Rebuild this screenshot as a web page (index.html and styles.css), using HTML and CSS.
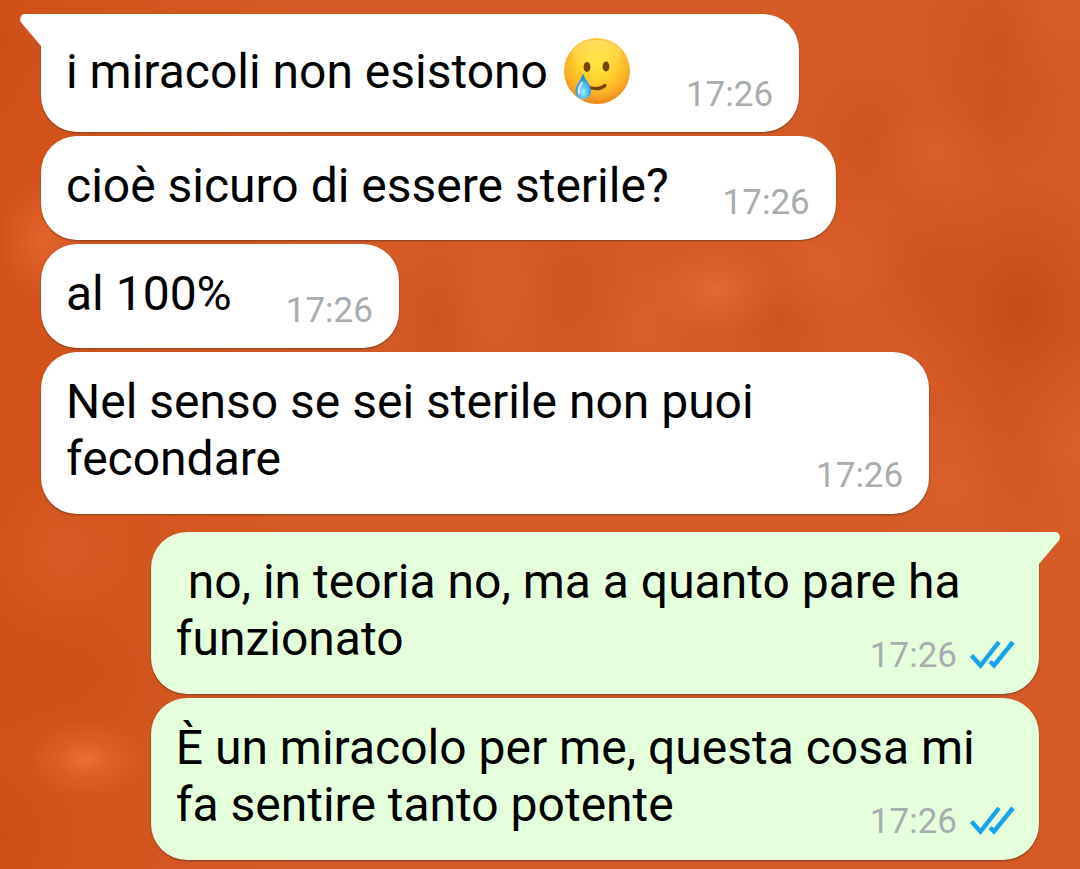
FILE: index.html
```html
<!DOCTYPE html>
<html lang="it">
<head>
    <meta charset="UTF-8">
    <meta name="viewport" content="width=device-width, initial-scale=1.0">
    <title>Chat</title>
    <link rel="stylesheet" href="styles.css">
</head>
<body>

    <svg width="0" height="0" class="defs" aria-hidden="true">
        <symbol id="ticks" viewBox="0 0 46 32">
            <path d="M2.5 15.5 L11.5 25.500 L30 2 M21 21.5 L25 25.500 L44 2" fill="none" stroke="#14a5ec" stroke-width="4.400"/>
        </symbol>
    </svg>

    <main class="chat">
        <div class="group">
            <div class="bubble has-tail">
                <svg class="tail" viewBox="0 0 22 34" aria-hidden="true"><path d="M22 0 H5 C0 0 -1 6 1.5 9 L21 32 H22 Z" fill="#fff"/></svg>
                <p class="text">i miracoli non esistono <svg class="emoji" viewBox="0 0 68 68" role="img" aria-label="faccina sorridente con lacrima">
                    <defs>
                        <radialGradient id="face" cx="50%" cy="36%" r="66%">
                            <stop offset="0" stop-color="#ffe840"/>
                            <stop offset="0.45" stop-color="#ffd02e"/>
                            <stop offset="0.75" stop-color="#fbae24"/>
                            <stop offset="1" stop-color="#e8821c"/>
                        </radialGradient>
                        <linearGradient id="shine" x1="0" y1="0" x2="0" y2="1">
                            <stop offset="0" stop-color="#fff09a" stop-opacity="0.5"/>
                            <stop offset="1" stop-color="#ffe35a" stop-opacity="0"/>
                        </linearGradient>
                        <radialGradient id="tear" cx="50%" cy="72%" r="60%">
                            <stop offset="0" stop-color="#a5e9fc"/>
                            <stop offset="0.5" stop-color="#55bdf0"/>
                            <stop offset="1" stop-color="#1c83d0"/>
                        </radialGradient>
                    </defs>
                    <circle cx="34" cy="34" r="33" fill="url(#face)"/>
                    <ellipse cx="34" cy="17" rx="25" ry="14" fill="url(#shine)"/>
                    <ellipse cx="24" cy="30" rx="3.4" ry="5" fill="#75400c"/>
                    <ellipse cx="43" cy="29.500" rx="3.4" ry="5" fill="#75400c"/>
                    <path d="M25 50 Q36 54 42 48.500" fill="none" stroke="#75400c" stroke-width="3.200" stroke-linecap="round"/>
                    <path d="M20 36.500 C22 43 28 47 28 54 C28 59 24.500 62 20 62 C15.500 62 12.500 59 12.500 54 C12.500 48 18 43 20 36.500 Z" fill="url(#tear)"/>
                    <path d="M19 46 Q15 51 16 56" fill="none" stroke="#d4f5fe" stroke-width="2" stroke-linecap="round"/>
                </svg></p>
                <div class="meta"><time>17:26</time></div>
            </div>
            <div class="bubble">
                <p class="text">cioè sicuro di essere sterile?</p>
                <div class="meta"><time>17:26</time></div>
            </div>
            <div class="bubble">
                <p class="text">al 100%</p>
                <div class="meta"><time>17:26</time></div>
            </div>
            <div class="bubble long">
                <p class="text">Nel senso se sei sterile non puoi fecondare</p>
                <div class="meta"><time>17:26</time></div>
            </div>
        </div>

        <div class="group mine">
            <div class="bubble long has-tail">
                <svg class="tail" viewBox="0 0 22 34" aria-hidden="true"><path d="M0 0 H17 C22 0 23 6 20.500 9 L1 32 H0 Z" fill="#e5ffdc"/></svg>
                <p class="text"> no, in teoria no, ma a quanto pare ha funzionato</p>
                <div class="meta"><time>17:26</time><svg class="ticks" role="img" aria-label="letto"><use href="#ticks"/></svg></div>
            </div>
            <div class="bubble long">
                <p class="text">È un miracolo per me, questa cosa mi fa sentire tanto potente</p>
                <div class="meta"><time>17:26</time><svg class="ticks" role="img" aria-label="letto"><use href="#ticks"/></svg></div>
            </div>
        </div>
    </main>

</body>
</html>
```
FILE: styles.css
```css
:root {
    --in: #ffffff;
    --out: #e5ffdc;
    --wall: #d65a25;
    --wall-light: #e268345c 0, #e268342e 45%;
    --wall-dark: #c64a1470 0, #c64a1438 45%;
    --time: #a7adae;
}

* {
    box-sizing: border-box;
}

/* Blurry wallpaper */
body {
    margin: 0;
    min-height: 100vh;
    font-family: Roboto, "Noto Sans", sans-serif;
    color: #000;
    background-color: var(--wall);
    background-image:
        radial-gradient(60px 40px at 85px 759px, #fa7a42b0, #fa7a4240 45%, transparent),
        radial-gradient(70px 46px at 716px 290px, #ee753d90, #ee753d38 45%, transparent),
        radial-gradient(60px 90px at 510px 285px, var(--wall-light), transparent),
        radial-gradient(70px 50px at 932px 148px, var(--wall-light), transparent),
        radial-gradient(60px 80px at 1055px 15px, var(--wall-light), transparent),
        radial-gradient(80px 60px at 820px 265px, var(--wall-light), transparent),
        radial-gradient(80px 110px at 1070px 450px, var(--wall-light), transparent),
        radial-gradient(80px 80px at 955px 485px, var(--wall-light), transparent),
        radial-gradient(50px 80px at 645px 330px, var(--wall-light), transparent),
        radial-gradient(80px 80px at 60px 550px, var(--wall-light), transparent),
        radial-gradient(50px 60px at 45px 240px, #ee703a90, transparent),
        radial-gradient(110px 140px at 1020px 310px, #bf420da0, #bf420d50 45%, transparent),
        radial-gradient(100px 80px at 1005px 35px, var(--wall-dark), transparent),
        radial-gradient(70px 80px at 870px 140px, var(--wall-dark), transparent),
        radial-gradient(80px 80px at 995px 110px, var(--wall-dark), transparent),
        radial-gradient(60px 90px at 925px 270px, var(--wall-dark), transparent),
        radial-gradient(70px 90px at 1020px 460px, var(--wall-dark), transparent),
        radial-gradient(80px 90px at 560px 290px, var(--wall-dark), transparent),
        radial-gradient(50px 80px at 435px 320px, var(--wall-dark), transparent),
        radial-gradient(60px 80px at 780px 320px, var(--wall-dark), transparent),
        radial-gradient(130px 80px at 60px 675px, var(--wall-dark), transparent),
        radial-gradient(70px 70px at 5px 835px, var(--wall-dark), transparent),
        radial-gradient(60px 90px at 0 40px, var(--wall-dark), transparent),
        linear-gradient(90deg, #d25119, transparent 300px);
}

.defs {
    position: absolute;
}

.chat {
    display: flex;
    flex-direction: column;
    gap: 18px;
    padding: 14px 41px 10px;
}

.group {
    display: flex;
    flex-direction: column;
    align-items: flex-start;
    gap: 4px;
}

.group.mine {
    align-items: flex-end;
}

/* Message bubbles */
.bubble {
    position: relative;
    display: flex;
    align-items: flex-end;
    gap: 54px;
    max-width: 89%;
    padding: 21px 26px 16px 25px;
    border-radius: 36px;
    background-color: var(--in);
    box-shadow: 0 1px 2px rgba(70, 45, 30, 0.6);
}

.mine .bubble {
    padding-right: 24px;
    background-color: var(--out);
}

.has-tail {
    border-top-left-radius: 0;
}

.mine .has-tail {
    border-radius: 36px 0 36px 36px;
}

.tail {
    position: absolute;
    top: 0;
    right: 100%;
    width: 22px;
    height: 34px;
    margin-right: -1px;
}

.mine .tail {
    right: auto;
    left: 100%;
    margin: 0 0 0 -1px;
}

.text {
    margin: 0 0 10px;
    font-size: 48px;
    line-height: 57px;
    white-space: pre-wrap;
}

/* Wrapped text runs over the time, which stays in the corner */
.long {
    display: grid;
    width: 89%;
    padding-bottom: 17px;
}

.long .text,
.long .meta {
    grid-area: 1 / 1;
}

.long .meta {
    align-self: end;
    justify-self: end;
}

.meta {
    display: flex;
    align-items: center;
    gap: 12px;
    font-size: 35px;
    line-height: 42px;
    color: var(--time);
}

.emoji {
    width: 68px;
    height: 68px;
    margin: 2px 1px 1px 3px;
    vertical-align: -18px;
}

.ticks {
    width: 46px;
    height: 32px;
}
```
